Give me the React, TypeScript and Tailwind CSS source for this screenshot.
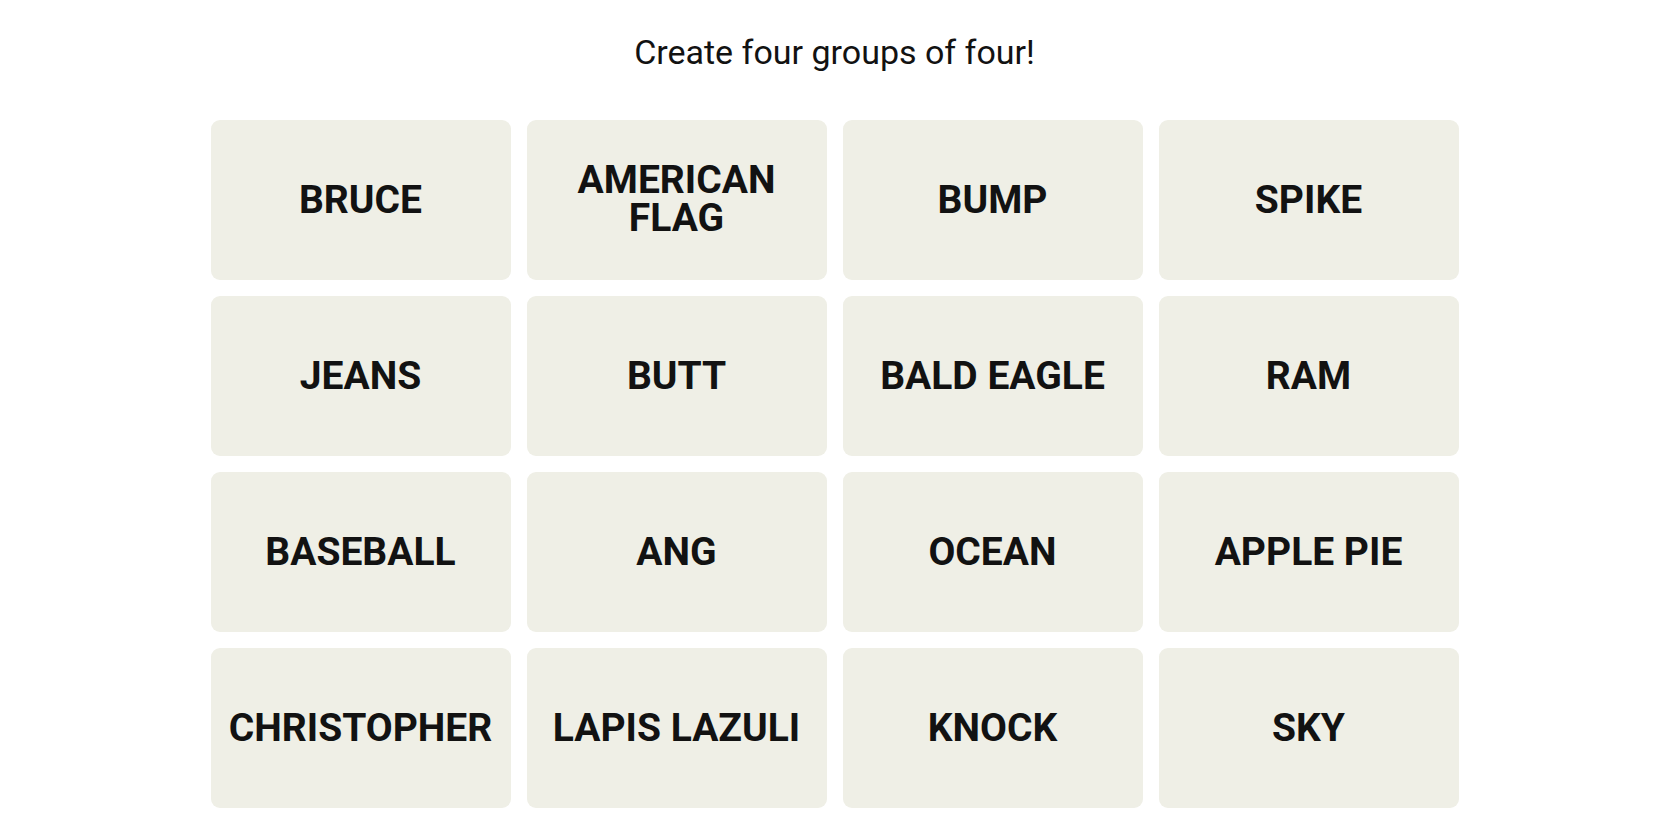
const words = [
  'BRUCE',
  'AMERICAN FLAG',
  'BUMP',
  'SPIKE',
  'JEANS',
  'BUTT',
  'BALD EAGLE',
  'RAM',
  'BASEBALL',
  'ANG',
  'OCEAN',
  'APPLE PIE',
  'CHRISTOPHER',
  'LAPIS LAZULI',
  'KNOCK',
  'SKY',
];

const Tile = ({ word }: { word: string }) => {
  const twoLines = word === 'AMERICAN FLAG';
  return (
    <button className="h-[160px] rounded-[9px] bg-[#efefe6] flex items-center justify-center px-4 text-center">
      <span
        className={`font-bold text-[39px] text-[#121212] uppercase ${
          twoLines ? 'leading-[38px] w-[200px] -mt-[3px]' : 'leading-[44px] whitespace-nowrap'
        }`}
      >
        {word}
      </span>
    </button>
  );
};

export default function App() {
  return (
    <div className="min-h-screen bg-white pt-[32px] font-['Roboto',sans-serif]">
      <h2 className="text-center text-[34px] leading-[40px] text-[#121212] font-normal">
        Create four groups of four!
      </h2>
      <div className="mx-auto mt-[48px] w-[1248px] grid grid-cols-4 gap-4">
        {words.map(w => (
          <Tile key={w} word={w} />
        ))}
      </div>
    </div>
  );
}
